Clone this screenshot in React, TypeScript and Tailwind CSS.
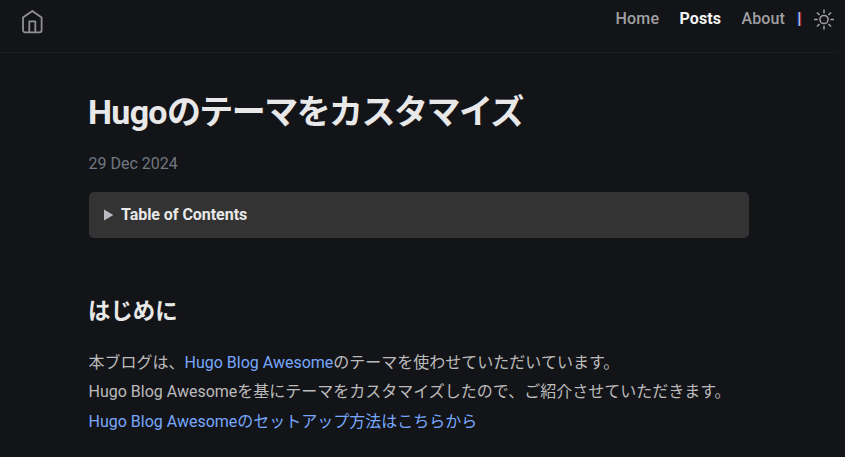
import React from "react";

const rays = [0, 45, 90, 135, 180, 225, 270, 315];

export default function App() {
  return (
    <div className="h-[457px] overflow-hidden bg-[#131418] font-['Roboto','Noto_Sans_CJK_JP',sans-serif] text-base text-[#bbbbbb]">
      <header className="flex h-[53px] w-[838px] justify-between border-b border-[#1b1c24] pl-5 pr-[2.5px]">
        <a href="#" className="mt-[9px] h-6 w-6 text-[#909092]">
          <svg width="24" height="25" viewBox="0 0 24 25" fill="none" stroke="currentColor" strokeWidth="1.8" strokeLinejoin="round">
            <path d="M3 8.6 12.3 2l9.3 6.6V21.3a2 2 0 0 1-2 2H5a2 2 0 0 1-2-2Z" />
            <path d="M9.3 23V12.3h6V23" />
          </svg>
        </a>
        <nav className="flex h-[38px] items-center font-medium leading-6 text-[#a0a0a2]">
          <a href="#" className="w-16 tracking-[0.2px]">Home</a>
          <a href="#" className="w-[62px] font-bold tracking-[0.1px] text-[#f4f4f4]">Posts</a>
          <a href="#" className="w-14 tracking-[0.1px]">About</a>
          <span className="w-[14px] text-base font-normal text-[#d8c8e8] [text-shadow:-1px_0_#2457d6,1px_0_#8c1520]">|</span>
          <svg width="24" height="24" viewBox="0 0 24 24" fill="none" stroke="currentColor" strokeWidth="1.5">
            <circle cx="12" cy="12.5" r="4.1" />
            {rays.map((a) => (
              <path key={a} d="M12 2v3.7" transform={`translate(0 .5) rotate(${a} 12 12)`} />
            ))}
          </svg>
        </nav>
      </header>
      <main className="ml-[89px] w-[660px]">
        <h1 className="-ml-px whitespace-nowrap pt-[35px] text-[34px] font-bold leading-[48px] tracking-[-1.55px] text-[#e8e8e8]">
          <span className="tracking-[-0.7px]">Hugo</span>のテーマをカスタマイズ
        </h1>
        <p className="-ml-[0.5px] mt-4 leading-6 text-[#71787f]">29 Dec 2024</p>
        <div className="mt-4 flex h-[46px] items-center rounded-[5px] bg-[#333333] pl-[15px] font-bold text-[#e8e8e8]">
          <svg width="10" height="12" viewBox="0 0 10 12" fill="#babbc0"><path d="M0 .5v11L9.3 6Z" /></svg>
          <span className="ml-[7px] tracking-[-0.05px]">Table of Contents</span>
        </div>
        <h2 className="-ml-px mt-[57px] text-[22.4px] font-bold leading-8 text-[#e8e8e8]">はじめに</h2>
        <p className="-ml-[0.5px] mt-[21px] whitespace-nowrap leading-[29.3px]">
          本ブログは、<a href="#" className="text-[#77a8fd]">Hugo Blog Awesome</a>のテーマを使わせていただいています。<br />
          Hugo Blog Awesomeを基にテーマをカスタマイズしたので、ご紹介させていただきます。<br />
          <a href="#" className="text-[#77a8fd]">Hugo Blog Awesomeのセットアップ方法はこちらから</a>
        </p>
      </main>
    </div>
  );
}
